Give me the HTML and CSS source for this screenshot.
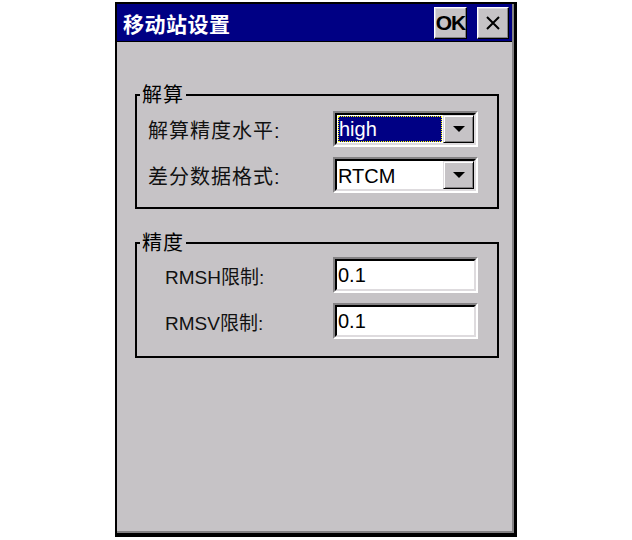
FILE: index.html
```html
<!DOCTYPE html>
<html>
    <head>
        <title>移动站设置</title>
        <link rel="stylesheet" href="styles.css">
    </head>
    <body>
        <div class="window">
            <div class="frame">
                <div class="titlebar">
                    <span class="title">移动站设置</span>
                    <div class="tbtn ok">OK</div>
                    <div class="tbtn close">
                        <svg width="16" height="14" viewBox="0 0 16 14">
                            <path d="M2 1 L14 13 M14 1 L2 13" stroke="#000" stroke-width="2" fill="none"/>
                        </svg>
                    </div>
                </div>
                <div class="client">
                    <fieldset class="group first">
                        <legend>解算</legend>
                        <div class="row">
                            <span class="label">解算精度水平:</span>
                            <div class="field combo">
                                <div class="inner">
                                    <div class="text"><span class="sel">high</span></div>
                                    <div class="drop"><span class="arrow"></span></div>
                                </div>
                            </div>
                        </div>
                        <div class="row">
                            <span class="label">差分数据格式:</span>
                            <div class="field combo">
                                <div class="inner">
                                    <div class="text">RTCM</div>
                                    <div class="drop"><span class="arrow"></span></div>
                                </div>
                            </div>
                        </div>
                    </fieldset>
                    <fieldset class="group second">
                        <legend>精度</legend>
                        <div class="row">
                            <span class="label indent">RMSH限制:</span>
                            <div class="field edit">
                                <div class="inner"><div class="text">0.1</div></div>
                            </div>
                        </div>
                        <div class="row">
                            <span class="label indent">RMSV限制:</span>
                            <div class="field edit">
                                <div class="inner"><div class="text">0.1</div></div>
                            </div>
                        </div>
                    </fieldset>
                </div>
            </div>
        </div>
    </body>
</html>
```

FILE: styles.css
```css
body {
    margin: 0;
    background: #fff;
    font-family: "Liberation Sans", "Noto Sans CJK SC", sans-serif;
}
.window {
    margin: 2px 0 0 115px;
    width: 402px;
    height: 535px;
    box-sizing: border-box;
    border: 2px solid #000;
    border-right-width: 3px;
    border-bottom-width: 4px;
}
.frame {
    height: 100%;
    box-sizing: border-box;
    border-right: 2px solid #848284;
    border-bottom: 2px solid #848284;
    background: #c6c3c6;
    display: flex;
    flex-direction: column;
}
.titlebar {
    height: 37px;
    background: #000084;
    border-bottom: 1px solid #000;
    display: flex;
    align-items: center;
    padding: 0 3px 0 6px;
}
.title {
    flex: 1;
    color: #fff;
    font-weight: bold;
    font-size: 21px;
    letter-spacing: 0.5px;
    font-family: "Noto Sans CJK SC", sans-serif;
}
.tbtn {
    width: 33px;
    height: 32px;
    box-sizing: border-box;
    background: #c6c3c6;
    border: 1px solid;
    border-color: #fff #000 #000 #fff;
    box-shadow: inset -1px -1px 0 #848284, inset 1px 1px 0 #dedbde;
    display: flex;
    align-items: center;
    justify-content: center;
}
.ok {
    font-weight: bold;
    font-size: 21px;
    letter-spacing: -1px;
    margin-right: 10px;
}
.close {
    width: 32px;
}
.client {
    flex: 1;
}
.group {
    margin: 0 13px 0 18px;
    border: 2px solid #000;
    padding: 5px 19px 14px 0;
    display: flex;
    flex-direction: column;
    gap: 10px;
}
.group.first {
    margin-top: 42px;
}
.group.second {
    margin-top: 23px;
    padding-top: 3px;
    padding-bottom: 17px;
}
legend {
    margin-left: 3px;
    padding: 0 2px;
    font-size: 20px;
    line-height: 22px;
    letter-spacing: 1px;
}
.row {
    display: flex;
    align-items: center;
    height: 36px;
}
.label {
    flex: 1;
    padding-left: 11px;
    font-size: 20px;
    letter-spacing: 1px;
    color: #111;
}
.label.indent {
    padding-left: 28px;
    letter-spacing: 0;
    font-size: 19px;
}
.field {
    width: 145px;
    height: 36px;
    box-sizing: border-box;
    border: 2px solid;
    border-color: #848284 #fff #fff #848284;
}
.inner {
    height: 100%;
    box-sizing: border-box;
    border: 2px solid;
    border-color: #000 #dedbde #dedbde #000;
    background: #fff;
    display: flex;
}
.text {
    flex: 1;
    font-size: 20px;
    line-height: 28px;
    padding-left: 1px;
}
.combo .text {
    padding: 1px;
}
.sel {
    display: block;
    height: 100%;
    box-sizing: border-box;
    background: #000084;
    color: #fff;
    outline: 1px dotted #ffff00;
    outline-offset: -1px;
    line-height: 26px;
    padding-left: 1px;
}
.drop {
    width: 31px;
    box-sizing: border-box;
    background: #c6c3c6;
    border: 1px solid;
    border-color: #dedbde #000 #000 #dedbde;
    box-shadow: inset 1px 1px 0 #fff, inset -1px -1px 0 #848284;
    display: flex;
    align-items: center;
    justify-content: center;
}
.arrow {
    width: 0;
    height: 0;
    border-left: 6px solid transparent;
    border-right: 6px solid transparent;
    border-top: 6px solid #000;
}
```
